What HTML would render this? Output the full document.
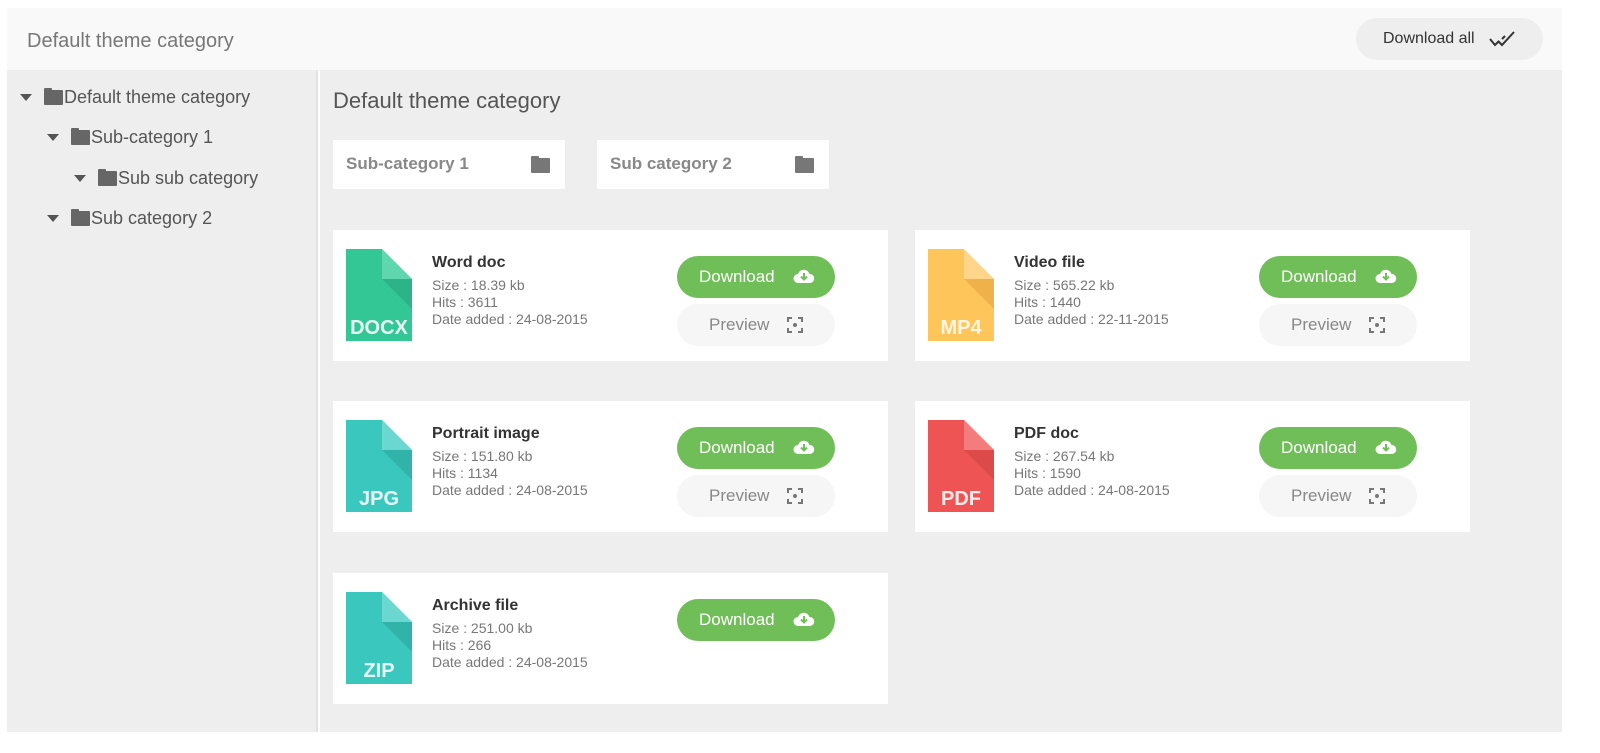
<!DOCTYPE html>
<html><head><meta charset="utf-8"><style>
*{box-sizing:border-box;margin:0;padding:0}
body{width:1600px;height:753px;background:#fff;font-family:"Liberation Sans",Arial,sans-serif;position:relative;overflow:hidden}
.hdr{position:absolute;left:7px;top:8px;width:1555px;height:62px;background:#f9f9f9}
.hdr h1{position:absolute;left:20px;top:22px;font-size:20px;font-weight:normal;color:#777}
.dall{position:absolute;left:1349px;top:10px;width:187px;height:42px;border-radius:21px;background:#eee;color:#333;font-size:16px;line-height:42px;padding-left:27px}
.dall svg{position:absolute;left:133px;top:12px}
.side{position:absolute;left:7px;top:70px;width:311px;height:662px;background:#eee;border-right:2px solid #e2e2e2}
.main{position:absolute;left:320px;top:70px;width:1242px;height:662px;background:#eee}
.tr{position:absolute;font-size:18px;color:#555;display:flex;align-items:center}
.tri{width:0;height:0;border-left:6px solid transparent;border-right:6px solid transparent;border-top:7px solid #555;margin-right:12px}
.fold{width:19px;height:15px;background:#666;border-radius:1px;margin-right:1px;position:relative}
.fold:before{content:"";position:absolute;left:0;top:-2px;width:8px;height:3px;background:#666;border-radius:1px 1px 0 0}
.mt{position:absolute;left:333px;top:88px;font-size:22px;color:#555}
.sub{position:absolute;top:140px;width:232px;height:49px;background:#fff;font-size:17px;font-weight:bold;color:#888;padding:14px 0 0 13px}
.sub .fold{position:absolute;right:14px;top:18px;background:#777}
.sub .fold:before{background:#777}
.card{position:absolute;width:555px;height:131px;background:#fff}
.card svg.ic{position:absolute;left:13px;top:19px}
.info{position:absolute;left:99px;top:24px;color:#777;font-size:14px;line-height:17px}
.info b{display:block;color:#333;font-size:16px;margin-bottom:6px}
.btn{position:absolute;left:344px;width:158px;height:42px;border-radius:21px;font-size:17px;line-height:42px;padding-left:22px}
.dl{top:26px;background:#6fbe57;color:#fff}
.pv{top:74px;background:#f6f6f6;color:#888;padding-left:32px}
.btn svg{position:absolute;top:12px}
</style></head><body>
<div class="hdr"><h1>Default theme category</h1>
<div class="dall">Download all<svg width="30" height="18" viewBox="0 0 30 18" fill="none" stroke="#333" stroke-width="2"><path d="M1 9l5 6 4-4"/><path d="M9 11l4 4 12-13"/><path d="M13 9l3-3"/></svg></div></div>
<div class="side"></div>
<div class="tr" style="left:20px;top:87px"><span class="tri"></span><span class="fold"></span>Default theme category</div>
<div class="tr" style="left:47px;top:127px"><span class="tri"></span><span class="fold"></span>Sub-category 1</div>
<div class="tr" style="left:74px;top:168px"><span class="tri"></span><span class="fold"></span>Sub sub category</div>
<div class="tr" style="left:47px;top:208px"><span class="tri"></span><span class="fold"></span>Sub category 2</div>
<div class="main"></div>
<div class="mt">Default theme category</div>
<div class="sub" style="left:333px">Sub-category 1<span class="fold"></span></div>
<div class="sub" style="left:597px">Sub category 2<span class="fold"></span></div>

<div class="card" style="left:333px;top:230px">
<svg class="ic" width="66" height="92"><path d="M0 0H36L66 30V92H0Z" fill="#34c796"/><path d="M36 0L66 30H36Z" fill="#5fd6ae"/><path d="M36 30H66V60Z" fill="#2db388"/><text x="33" y="85" text-anchor="middle" font-family="Liberation Sans" font-weight="bold" font-size="20" fill="#e8f8f2">DOCX</text></svg>
<div class="info"><b>Word doc</b>Size : 18.39 kb<br>Hits : 3611<br>Date added : 24-08-2015</div>
<div class="btn dl">Download<svg style="left:116px" width="22" height="16" viewBox="0 0 22 16"><path d="M5 15a4.5 4.5 0 0 1 0-9 6 6 0 0 1 11.5 0A4.5 4.5 0 0 1 17 15Z" fill="#fff"/><path d="M11 5v6M8 8.5l3 3 3-3" stroke="#6fbe57" stroke-width="2" fill="none"/></svg></div>
<div class="btn pv">Preview<svg style="left:110px;top:13px" width="16" height="16" viewBox="0 0 16 16" fill="none" stroke="#777" stroke-width="2"><path d="M1 5V1h4M11 1h4v4M15 11v4h-4M5 15H1v-4"/><circle cx="8" cy="8" r="2" fill="#777" stroke="none"/></svg></div>
</div>

<div class="card" style="left:915px;top:230px">
<svg class="ic" width="66" height="92"><path d="M0 0H36L66 30V92H0Z" fill="#fdc55a"/><path d="M36 0L66 30H36Z" fill="#fed68a"/><path d="M36 30H66V60Z" fill="#efb24a"/><text x="33" y="85" text-anchor="middle" font-family="Liberation Sans" font-weight="bold" font-size="20" fill="#fff6e4">MP4</text></svg>
<div class="info"><b>Video file</b>Size : 565.22 kb<br>Hits : 1440<br>Date added : 22-11-2015</div>
<div class="btn dl">Download<svg style="left:116px" width="22" height="16" viewBox="0 0 22 16"><path d="M5 15a4.5 4.5 0 0 1 0-9 6 6 0 0 1 11.5 0A4.5 4.5 0 0 1 17 15Z" fill="#fff"/><path d="M11 5v6M8 8.5l3 3 3-3" stroke="#6fbe57" stroke-width="2" fill="none"/></svg></div>
<div class="btn pv">Preview<svg style="left:110px;top:13px" width="16" height="16" viewBox="0 0 16 16" fill="none" stroke="#777" stroke-width="2"><path d="M1 5V1h4M11 1h4v4M15 11v4h-4M5 15H1v-4"/><circle cx="8" cy="8" r="2" fill="#777" stroke="none"/></svg></div>
</div>

<div class="card" style="left:333px;top:401px">
<svg class="ic" width="66" height="92"><path d="M0 0H36L66 30V92H0Z" fill="#3ac8be"/><path d="M36 0L66 30H36Z" fill="#6ad8d0"/><path d="M36 30H66V60Z" fill="#31b3aa"/><text x="33" y="85" text-anchor="middle" font-family="Liberation Sans" font-weight="bold" font-size="20" fill="#e8f8f6">JPG</text></svg>
<div class="info"><b>Portrait image</b>Size : 151.80 kb<br>Hits : 1134<br>Date added : 24-08-2015</div>
<div class="btn dl">Download<svg style="left:116px" width="22" height="16" viewBox="0 0 22 16"><path d="M5 15a4.5 4.5 0 0 1 0-9 6 6 0 0 1 11.5 0A4.5 4.5 0 0 1 17 15Z" fill="#fff"/><path d="M11 5v6M8 8.5l3 3 3-3" stroke="#6fbe57" stroke-width="2" fill="none"/></svg></div>
<div class="btn pv">Preview<svg style="left:110px;top:13px" width="16" height="16" viewBox="0 0 16 16" fill="none" stroke="#777" stroke-width="2"><path d="M1 5V1h4M11 1h4v4M15 11v4h-4M5 15H1v-4"/><circle cx="8" cy="8" r="2" fill="#777" stroke="none"/></svg></div>
</div>

<div class="card" style="left:915px;top:401px">
<svg class="ic" width="66" height="92"><path d="M0 0H36L66 30V92H0Z" fill="#ef5454"/><path d="M36 0L66 30H36Z" fill="#f47c7c"/><path d="M36 30H66V60Z" fill="#dc4a4a"/><text x="33" y="85" text-anchor="middle" font-family="Liberation Sans" font-weight="bold" font-size="20" fill="#fdeaea">PDF</text></svg>
<div class="info"><b>PDF doc</b>Size : 267.54 kb<br>Hits : 1590<br>Date added : 24-08-2015</div>
<div class="btn dl">Download<svg style="left:116px" width="22" height="16" viewBox="0 0 22 16"><path d="M5 15a4.5 4.5 0 0 1 0-9 6 6 0 0 1 11.5 0A4.5 4.5 0 0 1 17 15Z" fill="#fff"/><path d="M11 5v6M8 8.5l3 3 3-3" stroke="#6fbe57" stroke-width="2" fill="none"/></svg></div>
<div class="btn pv">Preview<svg style="left:110px;top:13px" width="16" height="16" viewBox="0 0 16 16" fill="none" stroke="#777" stroke-width="2"><path d="M1 5V1h4M11 1h4v4M15 11v4h-4M5 15H1v-4"/><circle cx="8" cy="8" r="2" fill="#777" stroke="none"/></svg></div>
</div>

<div class="card" style="left:333px;top:573px">
<svg class="ic" width="66" height="92"><path d="M0 0H36L66 30V92H0Z" fill="#3ac8be"/><path d="M36 0L66 30H36Z" fill="#6ad8d0"/><path d="M36 30H66V60Z" fill="#31b3aa"/><text x="33" y="85" text-anchor="middle" font-family="Liberation Sans" font-weight="bold" font-size="20" fill="#e8f8f6">ZIP</text></svg>
<div class="info"><b>Archive file</b>Size : 251.00 kb<br>Hits : 266<br>Date added : 24-08-2015</div>
<div class="btn dl">Download<svg style="left:116px" width="22" height="16" viewBox="0 0 22 16"><path d="M5 15a4.5 4.5 0 0 1 0-9 6 6 0 0 1 11.5 0A4.5 4.5 0 0 1 17 15Z" fill="#fff"/><path d="M11 5v6M8 8.5l3 3 3-3" stroke="#6fbe57" stroke-width="2" fill="none"/></svg></div>
</div>
</body></html>
